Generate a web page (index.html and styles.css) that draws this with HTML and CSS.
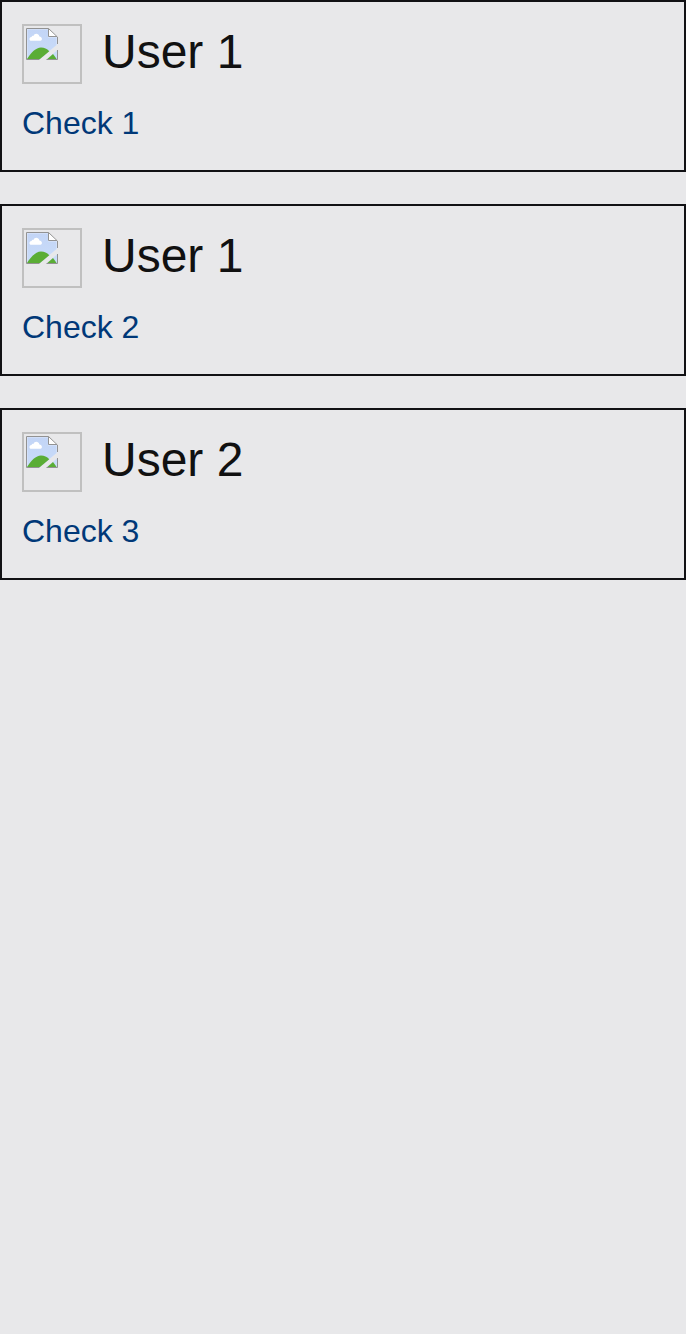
FILE: index.html
```html
<!DOCTYPE html>
<html lang="en">
<head>
<meta charset="utf-8">
<title>Checks</title>
<link rel="stylesheet" href="styles.css">
</head>
<body>
<svg class="defs" width="0" height="0" aria-hidden="true">
  <defs>
    <linearGradient id="sky" x1="0" y1="0" x2="0" y2="1"><stop offset="0" stop-color="#c3d5f6"/><stop offset="1" stop-color="#c9dcf9"/></linearGradient>
    <symbol id="picture" viewBox="0 0 32 32">
      <path d="M.5.5H22.500L31.500 9V16.300L13.500 31.500H.5Z" fill="#dfe9fc"/>
      <path d="M1.500 1.500H22V9.500H30.500V17L14 31H1.500Z" fill="url(#sky)"/>
      <path d="M1 31C5 24.500 10 19.500 15 19.500C18.500 19.500 20.800 20.800 23.300 23.200L14 31Z" fill="#5aad35"/>
      <path d="M31.500 22V31.500H20.500Z" fill="#c9dcf9"/>
      <path d="M21.300 31L27 26Q29 28.500 30.500 31Z" fill="#5aad35"/>
      <path d="M5.300 12.800C2.700 12.500 3 9 5.500 8.900C5.900 7.800 6.700 7.600 7.500 7.900C8.300 4.800 12.800 5 13.400 8.500C16.500 8.900 16.700 12.400 14.500 12.800Z" fill="#fff"/>
      <path d="M22.500.5V8.500H31.500Z" fill="#fff"/>
      <path d="M13.500 31.500H.5V.5H22.500L31.500 9V16M22.500.5V8.500H31M31.500 22V31.500H20.500" fill="none" stroke="#929292"/>
    </symbol>
  </defs>
</svg>
<main class="checks">
  <article class="card">
    <header class="user"><span class="avatar"><svg class="icon"><use href="#picture"/></svg></span><span class="name">User 1</span></header>
    <a class="check">Check 1</a>
  </article>
  <article class="card">
    <header class="user"><span class="avatar"><svg class="icon"><use href="#picture"/></svg></span><span class="name">User 1</span></header>
    <a class="check">Check 2</a>
  </article>
  <article class="card">
    <header class="user"><span class="avatar"><svg class="icon"><use href="#picture"/></svg></span><span class="name">User 2</span></header>
    <a class="check">Check 3</a>
  </article>
</main>
</body>
</html>
```
FILE: styles.css
```css
* { box-sizing: border-box; }
body {
  margin: 0;
  background: #e8e8ea;
  color: #111;
  font-family: "Liberation Sans", Arial, sans-serif;
}
.defs { display: block; }
.checks { display: flex; flex-direction: column; gap: 32px; }
.card {
  height: 172px;
  padding: 22px 20px 0;
  border: 2px solid #111114;
}
.user { display: flex; gap: 20px; height: 60px; }
.avatar {
  width: 60px;
  height: 60px;
  padding: 2px;
  border: 2px solid #c0c0c0;
}
.icon { display: block; width: 32px; height: 32px; }
.name { font-size: 48px; line-height: 56px; }
.check {
  display: block;
  margin-top: 20px;
  color: #003878;
  font-size: 32px;
  line-height: 38px;
}
```
